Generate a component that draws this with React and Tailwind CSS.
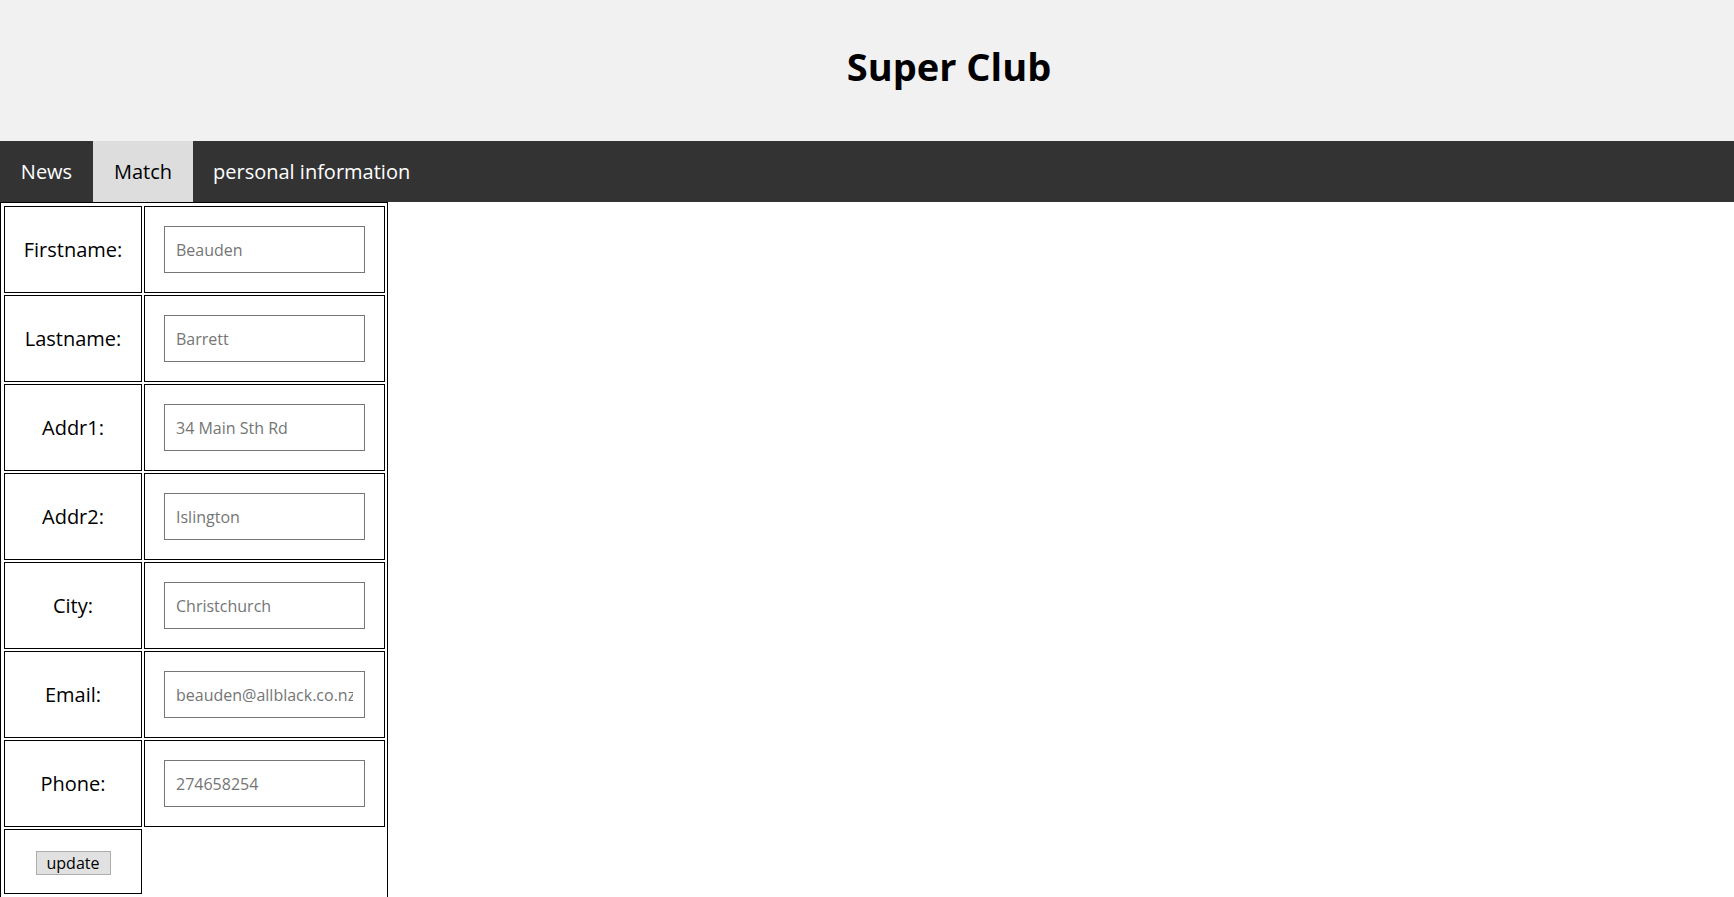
import React from "react";

const font = { fontFamily: '"Open Sans", "Noto Sans", sans-serif' };

const fields = [
  { label: "Firstname:", value: "Beauden" },
  { label: "Lastname:", value: "Barrett" },
  { label: "Addr1:", value: "34 Main Sth Rd" },
  { label: "Addr2:", value: "Islington" },
  { label: "City:", value: "Christchurch" },
  { label: "Email:", value: "beauden@allblack.co.nz" },
  { label: "Phone:", value: "274658254" },
];

export default function App() {
  return (
    <div className="min-h-screen bg-white text-black" style={font}>
      {/* header */}
      <header className="flex h-[141px] justify-center bg-[#f1f1f1] pl-[164px] pt-[47px]">
        <h1 className="text-[38px] font-bold leading-none">Super Club</h1>
      </header>

      {/* nav */}
      <nav className="flex h-[61px] bg-[#333333] text-[20px]">
        <a className="flex w-[93px] items-center justify-center text-white">News</a>
        <a className="flex w-[100px] items-center justify-center bg-[#dddddd] text-black">Match</a>
        <a className="flex items-center px-[20px] text-white">personal information</a>
      </nav>

      {/* personal info form */}
      <div className="w-[388px] border border-black pl-[3px] pr-[2px] pt-[3px] pb-[6px]">
        <div className="grid grid-cols-[138px_241px] gap-[2px]">
          {fields.map((f) => (
            <React.Fragment key={f.label}>
              <div className="flex h-[87px] items-center justify-center border border-black text-[20px]">
                {f.label}
              </div>
              <div className="flex h-[87px] items-center border border-black p-[19px]">
                <input
                  type="text"
                  placeholder={f.value}
                  className="h-[47px] w-[201px] border border-[#767676] px-[11px] text-[16px] outline-none placeholder:text-[#757575]"
                />
              </div>
            </React.Fragment>
          ))}
          <div className="flex h-[65px] items-center justify-center border border-black pt-[3px]">
            <button className="h-[24px] w-[75px] border border-[#adadad] bg-[#e1e1e1] text-[16px] leading-none text-black">
              update
            </button>
          </div>
        </div>
      </div>
    </div>
  );
}
